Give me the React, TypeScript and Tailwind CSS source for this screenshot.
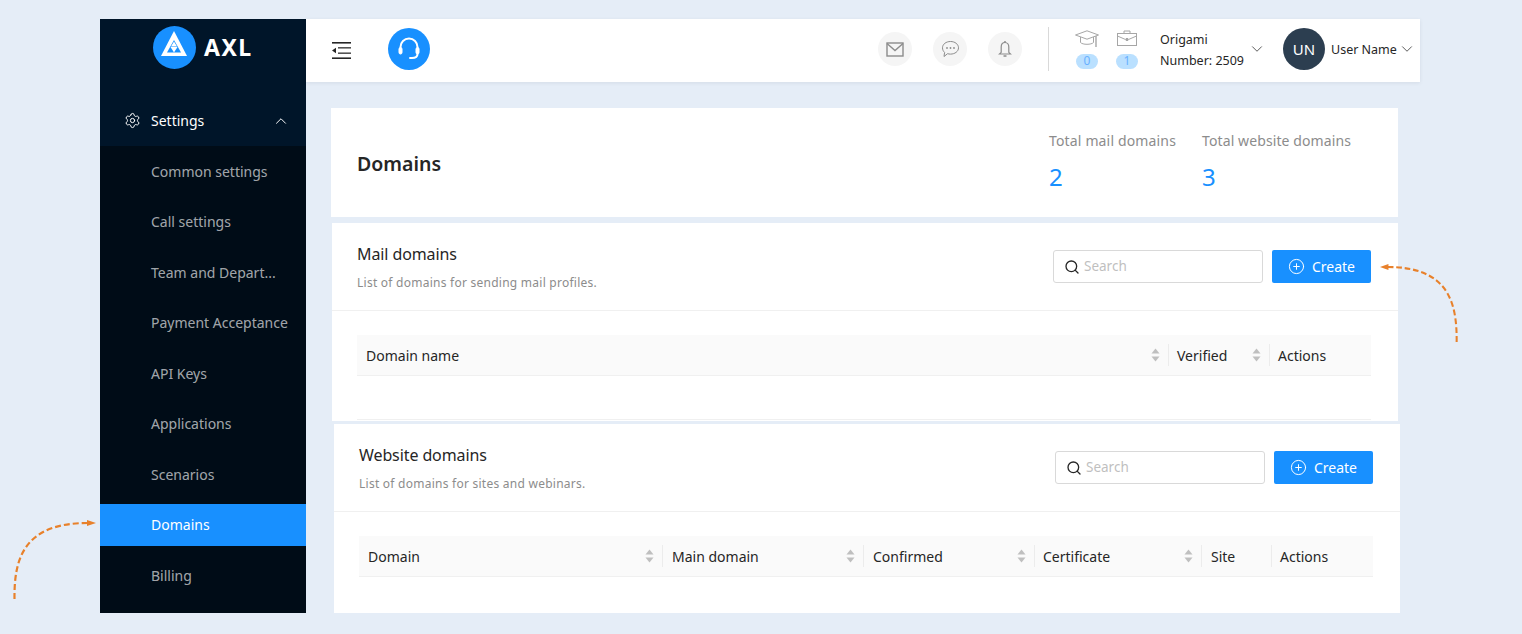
import { ChevronDown, ChevronUp, CirclePlus, Search, Settings } from 'lucide-react';

const menuItems = [
  'Common settings',
  'Call settings',
  'Team and Depart...',
  'Payment Acceptance',
  'API Keys',
  'Applications',
  'Scenarios',
  'Domains',
  'Billing',
];

function SortIcon() {
  return (
    <svg width="9" height="14" viewBox="0 0 9 14" className="shrink-0 fill-[#bfbfbf]">
      <path d="M4.5 0.5 8.5 5.5H0.5Z" />
      <path d="M0.5 8.5H8.5L4.5 13.5Z" />
    </svg>
  );
}

function Arrow({ className }: { className: string }) {
  return (
    <svg viewBox="0 0 84 82" preserveAspectRatio="none" className={className}>
      <path d="M2.5 79C2 38 12 3 76 3" fill="none" stroke="#e8812b" strokeWidth="2.2" strokeDasharray="6 3" />
      <path d="M84 3 75 0V6Z" fill="#e8812b" />
    </svg>
  );
}

function Toolbar({ title, subtitle }: { title: string; subtitle: string }) {
  return (
    <div className="flex h-[88px] items-center justify-between border-b border-[#f0f0f0] pl-[25px] pr-[27px]">
      <div className="pt-[2px]">
        <div className="text-base leading-[22px] tracking-[-0.1px] text-[#262626]">{title}</div>
        <div className="mt-[9px] text-xs leading-[18px] tracking-[0.25px] text-[#8c8c8c]">{subtitle}</div>
      </div>
      <div className="flex items-center gap-[9px]">
        <div className="flex h-[33px] w-[210px] items-center gap-[4px] rounded-[3px] border border-[#d9d9d9] bg-white pl-[10px] text-[13.5px] text-[#bfbfbf]">
          <Search size={16} strokeWidth={2} className="text-[#262626]" />
          Search
        </div>
        <div className="flex h-[33px] w-[99px] items-center justify-center gap-[7px] rounded-[2px] bg-[#1890ff] text-sm text-white">
          <CirclePlus size={17} strokeWidth={1.4} />
          Create
        </div>
      </div>
    </div>
  );
}

function HeadCell({ label, className, sort = true, divider = true }: { label: string; className: string; sort?: boolean; divider?: boolean }) {
  return (
    <div className={`relative flex h-full shrink-0 items-center justify-between pr-[9px] ${className}`}>
      <span className="pt-[2px]">{label}</span>
      {sort && <SortIcon />}
      {divider && <span className="absolute right-0 top-[9px] h-[22px] w-px bg-[#ececec]" />}
    </div>
  );
}

function Logo() {
  return (
    <svg width="43" height="43" viewBox="0 0 43 43" className="shrink-0">
      <circle cx="21.5" cy="21.5" r="21.5" fill="#1890ff" />
      <path d="M21 5 34 30H8Z" fill="#fff" />
      <path d="M21 14 28 26.5H14Z" fill="#1890ff" />
      <path d="M21 15.5 24 20.5H18Z" fill="#fff" />
      <path d="M17.5 21H24.5L21 26.5Z" fill="#fff" />
    </svg>
  );
}

function RoundIcon({ children }: { children: React.ReactNode }) {
  return <div className="flex h-[34px] w-[34px] items-center justify-center rounded-full bg-[#f5f5f5]">{children}</div>;
}

export default function App() {
  return (
    <div className="relative flex h-[634px] w-[1522px] overflow-hidden bg-[#e5edf7] pl-[100px] pt-[19px] font-['Noto_Sans',sans-serif]">
      {/* Sidebar */}
      <aside className="flex h-[594px] w-[206px] shrink-0 flex-col bg-[#001529]">
        <div className="flex h-[76px] items-start pl-[53px] pt-[7px]">
          <Logo />
          <span className="ml-2 text-[23px] font-bold leading-[43px] tracking-[1.5px] text-white">AXL</span>
        </div>
        <div className="flex h-[51px] items-center justify-between pl-[24px] pr-[16px] text-sm text-white">
          <div className="flex items-center gap-[10px]">
            <Settings size={17} strokeWidth={1.4} />
            Settings
          </div>
          <ChevronUp size={18} strokeWidth={1.3} />
        </div>
        <nav className="flex flex-1 flex-col gap-[8.5px] bg-[#000c17] pt-[4px]">
          {menuItems.map((item) => (
            <div
              key={item}
              className={`flex h-[42px] shrink-0 items-center pl-[51px] pt-[1px] text-sm ${
                item === 'Domains' ? 'bg-[#1890ff] text-white' : 'text-[#ffffffa6]'
              }`}
            >
              {item}
            </div>
          ))}
        </nav>
      </aside>

      <div className="w-[1114px] shrink-0">
        {/* Header */}
        <header className="flex h-[63px] items-center bg-white pb-[3px] pl-[26px] shadow-[0_1px_4px_rgba(0,21,41,0.08)]">
          <svg width="19" height="17" viewBox="0 0 19 17" className="mt-[3px] shrink-0 fill-[#262626]">
            <rect x="0" y="0" width="19" height="1.6" />
            <rect x="6" y="5" width="13" height="1.6" fill="#555" />
            <rect x="6" y="10.4" width="13" height="1.6" fill="#555" />
            <rect x="0" y="15.4" width="19" height="1.6" />
            <path d="M0 8.5 4 5.8V11.2Z" />
          </svg>
          <div className="ml-[37px] flex h-[42px] w-[42px] shrink-0 items-center justify-center rounded-full bg-[#1890ff]">
            <svg width="26" height="26" viewBox="0 0 26 26" fill="none" stroke="#fff" strokeWidth="2" strokeLinecap="round">
              <path d="M4.5 14V11a8.5 8.5 0 0 1 17 0V14" />
              <rect x="3" y="11.5" width="3" height="6.5" rx="1.5" fill="#fff" strokeWidth="1" />
              <rect x="20" y="11.5" width="3" height="6.5" rx="1.5" fill="#fff" strokeWidth="1" />
              <path d="M21.5 18c0 3-2 4-5.5 4h-2" />
            </svg>
          </div>

          <div className="ml-[448px] flex items-center gap-[21px]">
            <RoundIcon>
              <svg width="18" height="15" viewBox="0 0 18 15" fill="none" stroke="#8c8c8c" strokeWidth="1.4">
                <rect x="1" y="1" width="16" height="13" />
                <path d="M1 1.5 9 8.5 17 1.5" />
              </svg>
            </RoundIcon>
            <RoundIcon>
              <svg width="19" height="18" viewBox="0 0 19 18" fill="none" stroke="#8c8c8c" strokeWidth="1">
                <path d="M9.5 1.5c4.4 0 8 2.7 8 6.3s-3.6 6.3-8 6.3c-1 0-2-.1-2.9-.4L3 16.5l.6-4.1C2.300 11.300 1.500 9.700 1.500 7.800 1.500 4.200 5.100 1.500 9.500 1.500Z" />
                <circle cx="6" cy="8" r="0.9" fill="#8c8c8c" stroke="none" />
                <circle cx="9.500" cy="8" r="0.9" fill="#8c8c8c" stroke="none" />
                <circle cx="13" cy="8" r="0.9" fill="#8c8c8c" stroke="none" />
              </svg>
            </RoundIcon>
            <RoundIcon>
              <svg width="14" height="18" viewBox="0 0 14 18" fill="none" stroke="#8c8c8c" strokeWidth="1.2">
                <path d="M7 2.500c-2.500 0-3.800 2-3.800 4.500v5.300L1.500 14h11l-1.700-1.700V7c0-2.500-1.300-4.500-3.800-4.500Z" />
                <path d="M7 1v1.500M5.500 16h3" strokeWidth="1.500" />
              </svg>
            </RoundIcon>
          </div>
          <div className="ml-[26px] h-[44px] w-px bg-[#d9d9d9]" />

          <div className="ml-[26px] flex w-[24px] flex-col items-center">
            <svg width="24" height="18" viewBox="0 0 24 18" fill="none" stroke="#a6a6a6" strokeWidth="1">
              <path d="M12 .8 23.500 5 12 9.200 .5 5Z" />
              <path d="M5.500 7v5.500c2 2.400 11 2.400 13 0V7" />
              <path d="M21 6v11" strokeWidth="1.400" />
            </svg>
            <span className="mt-[6px] flex h-[15px] w-[22px] items-center justify-center rounded-[8px] bg-[#bae0ff] text-xs text-[#69b1ff]">0</span>
          </div>
          <div className="ml-[17px] flex w-[22px] flex-col items-center">
            <svg width="20" height="18" viewBox="0 0 20 18" fill="none" stroke="#a6a6a6" strokeWidth="1">
              <rect x=".5" y="3.500" width="19" height="12" />
              <path d="M7 3.500V1h6v2.500M.5 6 8.500 9.500h3L19.500 6" />
              <rect x="8.800" y="8" width="2.400" height="3" fill="#a6a6a6" stroke="none" />
            </svg>
            <span className="mt-[6px] flex h-[15px] w-[22px] items-center justify-center rounded-[8px] bg-[#bae0ff] text-xs text-[#69b1ff]">1</span>
          </div>
          <div className="ml-[22px] w-[87px] pt-[2px] text-[12.5px] leading-[21px] text-[#262626]">
            <div>Origami</div>
            <div>Number: 2509</div>
          </div>
          <ChevronDown size={18} strokeWidth={1} className="mx-px text-[#262626]" />
          <div className="ml-[16px] flex h-[42px] w-[42px] shrink-0 items-center justify-center rounded-full bg-[#2c3e50] text-[15px] text-white">UN</div>
          <span className="ml-[6px] w-[66px] whitespace-nowrap pt-[2px] text-[12.5px] text-[#262626]">User Name</span>
          <ChevronDown size={18} strokeWidth={1} className="mx-px text-[#262626]" />
        </header>

        {/* Page title */}
        <section className="ml-[25px] mt-[26px] flex h-[109px] w-[1067px] items-center justify-between bg-white pl-[26px]">
          <h1 className="pt-[2px] text-[19.5px] font-semibold text-[#262626]">Domains</h1>
          <div className="flex pb-[2px] pr-[47px]">
            <div className="w-[153px]">
              <div className="text-sm leading-[22px] tracking-[0.15px] text-[#8c8c8c]">Total mail domains</div>
              <div className="mt-[9px] text-2xl leading-[32px] text-[#1890ff]">2</div>
            </div>
            <div>
              <div className="text-sm leading-[22px] tracking-[0.1px] text-[#8c8c8c]">Total website domains</div>
              <div className="mt-[9px] text-2xl leading-[32px] text-[#1890ff]">3</div>
            </div>
          </div>
        </section>

        {/* Mail domains */}
        <section className="ml-[26px] mt-[6px] h-[198px] w-[1066px] bg-white">
          <Toolbar title="Mail domains" subtitle="List of domains for sending mail profiles." />
          <div className="ml-[25px] mr-[27px] mt-6 h-[85px] border-b border-[#f0f0f0] text-sm text-[#262626]">
            <div className="flex h-[41px] items-center border-b border-[#f0f0f0] bg-[#fafafa]">
              <HeadCell label="Domain name" className="w-[812px] pl-[9px]" />
              <HeadCell label="Verified" className="w-[101px] pl-[8px]" />
              <HeadCell label="Actions" className="flex-1 pl-[8px]" sort={false} divider={false} />
            </div>
          </div>
        </section>

        {/* Website domains */}
        <section className="ml-[28px] mt-[3px] h-[189px] w-[1066px] bg-white">
          <Toolbar title="Website domains" subtitle="List of domains for sites and webinars." />
          <div className="ml-[25px] mr-[27px] mt-6 text-sm text-[#262626]">
            <div className="flex h-[41px] items-center border-b border-[#f0f0f0] bg-[#fafafa]">
              <HeadCell label="Domain" className="w-[304px] pl-[9px]" />
              <HeadCell label="Main domain" className="w-[201px] pl-[9px]" />
              <HeadCell label="Confirmed" className="w-[171px] pl-[9px]" />
              <HeadCell label="Certificate" className="w-[167px] pl-[8px]" />
              <HeadCell label="Site" className="w-[70px] pl-[9px]" sort={false} />
              <HeadCell label="Actions" className="flex-1 pl-[8px]" sort={false} divider={false} />
            </div>
          </div>
        </section>
      </div>

      {/* Annotation arrows */}
      <div className="absolute left-[12px] top-[520px]">
        <Arrow className="h-[82px] w-[84px]" />
      </div>
      <div className="absolute left-[1380px] top-[264px]">
        <Arrow className="h-[81px] w-[79px] -scale-x-100" />
      </div>
    </div>
  );
}
